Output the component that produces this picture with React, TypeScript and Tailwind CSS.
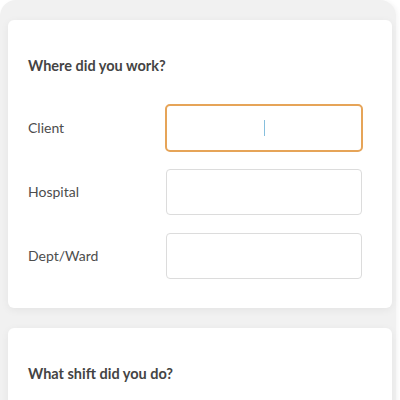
import React from 'react';

const rows = [
  { label: 'Client', focused: true },
  { label: 'Hospital', focused: false },
  { label: 'Dept/Ward', focused: false },
];

export default function App() {
  return (
    <div className="w-[400px] h-[400px] bg-white overflow-hidden" style={{ fontFamily: 'Lato, "Open Sans", sans-serif' }}>
      <div className="w-[396px] h-[420px] bg-[#f1f1f1] rounded-t-[16px] pt-[20px] shadow-[2px_0_4px_rgba(0,0,0,0.04)]">
        {/* Where did you work */}
        <div className="ml-2 w-[384px] bg-white rounded-[6px] shadow-[0_2px_8px_rgba(0,0,0,0.06)] pt-[37px] pb-[20px]">
          <h2 className="px-[20px] text-[14.5px] leading-[18px] font-bold text-[#444444] mb-[21px]">Where did you work?</h2>
          {rows.map((row) => (
            <div key={row.label} className="flex items-center h-[64px] px-[20px]">
              <span className="w-[138px] -mt-[2px] text-[14px] text-[#4d4d4d]">{row.label}</span>
              {row.focused ? (
                <div className="-ml-px w-[198px] h-[48px] rounded-[5px] border-2 border-[#e6a458] flex items-center justify-center">
                  <span className="w-px h-[16px] bg-[#86bfdd]" />
                </div>
              ) : (
                <div className="w-[196px] h-[46px] rounded-[4px] border border-[#dcdcdc] bg-white" />
              )}
            </div>
          ))}
        </div>

        {/* What shift */}
        <div className="ml-2 mt-[20px] w-[384px] h-[120px] bg-white rounded-[6px] shadow-[0_2px_8px_rgba(0,0,0,0.06)] pt-[37px]">
          <h2 className="px-[20px] text-[14.5px] leading-[18px] font-bold text-[#444444]">What shift did you do?</h2>
        </div>
      </div>
    </div>
  );
}
